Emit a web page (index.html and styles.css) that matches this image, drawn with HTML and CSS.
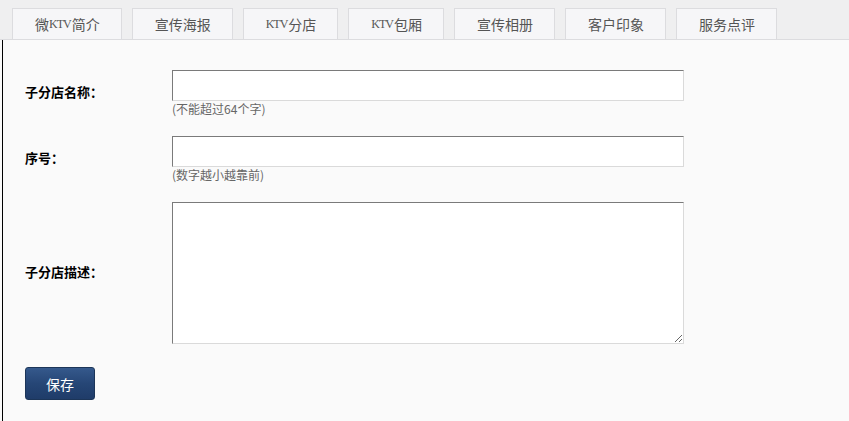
FILE: index.html
```html
<!DOCTYPE html>
<html lang="zh-CN">
<head>
<meta charset="utf-8">
<title>子分店</title>
<link rel="stylesheet" href="styles.css">
</head>
<body>
<div class="tabbar">
  <a class="tab">微<span class="latin">KTV</span>简介</a>
  <a class="tab">宣传海报</a>
  <a class="tab"><span class="latin">KTV</span>分店</a>
  <a class="tab"><span class="latin">KTV</span>包厢</a>
  <a class="tab">宣传相册</a>
  <a class="tab">客户印象</a>
  <a class="tab">服务点评</a>
</div>
<div class="panel">
  <form class="form">
    <div class="row">
      <label class="label">子分店名称：</label>
      <div class="field">
        <input class="input" type="text">
        <div class="hint">(不能超过64个字)</div>
      </div>
    </div>
    <div class="row">
      <label class="label">序号：</label>
      <div class="field">
        <input class="input" type="text">
        <div class="hint">(数字越小越靠前)</div>
      </div>
    </div>
    <div class="row">
      <label class="label">子分店描述：</label>
      <div class="field">
        <textarea class="textarea"></textarea>
      </div>
    </div>
    <div class="actions">
      <button class="btn" type="button">保存</button>
    </div>
  </form>
</div>
</body>
</html>
```
FILE: styles.css
```css
html, body {
  margin: 0;
  padding: 0;
  height: 100%;
  background: #fafafa;
  font-family: "Noto Sans CJK SC", sans-serif;
}
body {
  display: flex;
  flex-direction: column;
}
.tabbar {
  display: flex;
  align-items: flex-end;
  gap: 10px;
  height: 39px;
  padding-left: 12px;
  background: #efeff0;
  border-bottom: 1px solid #dcdcdf;
}
.tab {
  display: flex;
  align-items: center;
  justify-content: center;
  height: 30px;
  padding: 0 21px 0 22px;
  background: #f6f6f8;
  border: 1px solid #dcdcdf;
  border-bottom: none;
  font-size: 14px;
  color: #555;
  cursor: pointer;
}
.latin {
  font-family: "Liberation Serif", serif;
  font-size: 12px;
  letter-spacing: -1px;
  margin-right: 1px;
}
.panel {
  flex: 1;
  margin-left: 2px;
  border-left: 1px solid #000;
  background: #fafafa;
}
.form {
  display: flex;
  flex-direction: column;
  padding: 30px 0 0 22px;
}
.row {
  display: grid;
  grid-template-columns: 147px 512px;
  align-items: center;
  margin-bottom: 20px;
}
.label {
  font-size: 13px;
  font-weight: bold;
  color: #000;
  padding-bottom: 4px;
}
.field {
  display: flex;
  flex-direction: column;
}
.input, .textarea {
  box-sizing: border-box;
  width: 512px;
  margin: 0;
  background: #fff;
  border-style: solid;
  border-width: 1px;
  border-color: #7a7a7a #dadada #dadada #7a7a7a;
  font-size: 13px;
  outline: none;
}
.input {
  height: 31px;
}
.textarea {
  height: 142px;
  resize: both;
  display: block;
}
.hint {
  font-size: 12px;
  line-height: 14px;
  color: #666;
  margin-top: 1px;
}
.actions {
  display: flex;
  margin-top: 3px;
}
.btn {
  width: 70px;
  height: 33px;
  border: 1px solid #1c3558;
  border-radius: 3px;
  background: linear-gradient(#35598c, #264676 50%, #1f3c69);
  color: #fff;
  font-size: 14px;
  padding: 0;
  cursor: pointer;
}
```
